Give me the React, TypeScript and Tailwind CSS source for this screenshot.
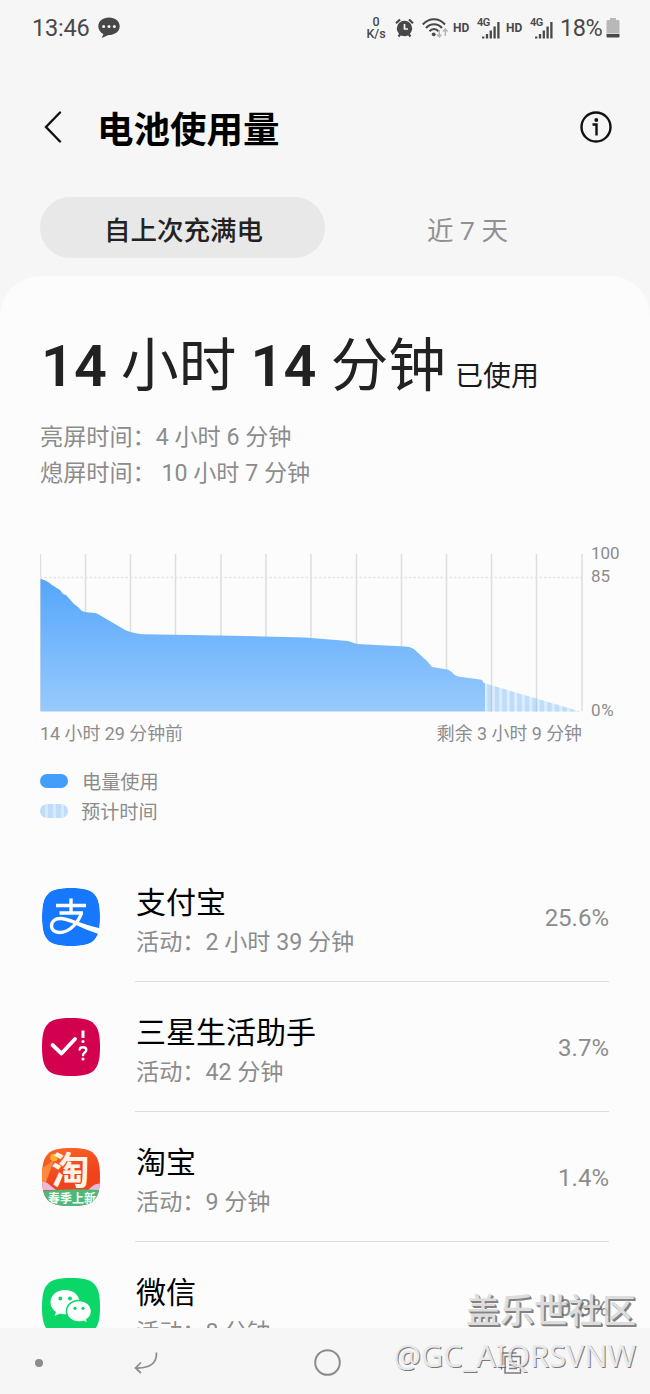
const apps = [
  { name: '支付宝', active: '活动：2 小时 39 分钟', percent: '25.6%', Icon: AlipayIcon },
  { name: '三星生活助手', active: '活动：42 分钟', percent: '3.7%', Icon: AssistantIcon },
  { name: '淘宝', active: '活动：9 分钟', percent: '1.4%', Icon: TaobaoIcon },
  { name: '微信', active: '活动：8 分钟', percent: '0.8%', Icon: WechatIcon },
];

const gridLines = [0.5, 45.5, 90.5, 135.5, 181, 226, 271, 316.5, 361.5, 406.5, 451.5, 496.5, 542];
const stripes = [445.5, 453, 460.5, 468, 475.5, 483, 490.5, 498, 505.5, 513, 520.5, 528, 535.5];

// One UI squircle shared by every app icon
const SQUIRCLE = 'M29 0C52 0 58 6 58 29C58 52 52 58 29 58C6 58 0 52 0 29C0 6 6 0 29 0Z';

function AlipayIcon() {
  return (
    <svg className="block h-[58px] w-[58px]" viewBox="0 0 58 58">
      <clipPath id="alipay-clip"><path d={SQUIRCLE} /></clipPath>
      <g clipPath="url(#alipay-clip)">
        <path d={SQUIRCLE} fill="#1677ff" />
        <g fill="none" stroke="#fff">
          <path d="M14 17.500H44M29 10.500V25M17.500 25H41" strokeWidth="3.400" />
          <path d="M39.500 25C36.500 34 28 44.500 17.500 44.500C12 44.500 9.500 41.500 9.500 38C9.500 33.500 13 30.500 18.500 30.500C27 30.500 37 37.500 58 42" strokeWidth="3.400" />
        </g>
        <path d="M32 33C40 37 50 39.500 58 40.500V46.500C50 44 40 40 31 35.500Z" fill="#fff" />
      </g>
    </svg>
  );
}

function AssistantIcon() {
  return (
    <svg className="block h-[58px] w-[58px]" viewBox="0 0 58 58">
      <path d={SQUIRCLE} fill="#d3004f" />
      <g fill="none" stroke="#fff" strokeLinecap="round" strokeLinejoin="round">
        <path d="M10.500 27L19.500 35.500L33 21" strokeWidth="3.800" />
        <path d="M41 12.500V20" strokeWidth="3" strokeLinecap="butt" />
        <path d="M37.700 31.500C38 28.500 44.300 28.300 44.300 32C44.300 34.500 41 34.500 41 37.300" strokeWidth="2.300" />
      </g>
      <circle cx="41" cy="23.500" r="1.600" fill="#fff" />
      <circle cx="41" cy="41" r="1.600" fill="#fff" />
    </svg>
  );
}

function TaobaoIcon() {
  return (
    <svg className="block h-[58px] w-[58px]" viewBox="0 0 58 58">
      <defs>
        <linearGradient id="taobao-bg" x1="0" y1="0" x2="0.3" y2="1">
          <stop offset="0" stopColor="#fa6a2a" />
          <stop offset="0.6" stopColor="#f0431c" />
        </linearGradient>
        <clipPath id="taobao-clip"><path d={SQUIRCLE} /></clipPath>
      </defs>
      <g clipPath="url(#taobao-clip)">
        <path d="M0 0H58V58H0Z" fill="url(#taobao-bg)" />
        <path d="M0 20L12 12L4 34L0 36Z" fill="#fb8a3c" />
        <path d="M0 34C5 33 8 38 14 42H0ZM58 36C53 35 50 39 46 42H58Z" fill="#e9b9dc" />
        <path d="M0 43Q29 40 58 42V58H0Z" fill="#4fb878" />
        <circle cx="12" cy="9.500" r="3.800" fill="#fdb22b" />
        <text x="28.500" y="35.500" textAnchor="middle" fontSize="38" fontWeight="600" fill="#fff3e6" fontFamily="'Noto Sans CJK SC', sans-serif">淘</text>
        <text x="30" y="54.500" textAnchor="middle" fontSize="12" fontWeight="700" fill="#f2fff4" fontFamily="'Noto Sans CJK SC', sans-serif">春季上新</text>
      </g>
    </svg>
  );
}

function WechatIcon() {
  return (
    <svg className="block h-[58px] w-[58px]" viewBox="0 0 58 58">
      <path d={SQUIRCLE} fill="#0bd768" />
      <path d="M23 12C14.500 12 8.500 17.500 8.500 24.300C8.500 28.500 10.500 31.500 14 34L12.500 38L18 35.500C31 39 37.500 31 37.500 24.300C37.500 17.500 31.500 12 23 12Z" fill="#fff" />
      <path d="M37 22.500C29.500 22.500 24.500 27.300 24.500 33.300C24.500 39.300 29.500 44 37 44C38.500 44 40 43.800 41.300 43.400L45.800 45.500L44.700 41.700C47.800 39.700 49.500 36.700 49.500 33.300C49.500 27.300 44.500 22.500 37 22.500Z" fill="#fff" stroke="#0bd768" strokeWidth="1.500" />
      <g fill="#0bd768">
        <circle cx="18.300" cy="20.500" r="1.900" />
        <circle cx="28" cy="20.500" r="1.900" />
        <circle cx="33" cy="30.300" r="1.600" />
        <circle cx="41" cy="30.300" r="1.600" />
      </g>
    </svg>
  );
}

function SignalIcon() {
  return (
    <div className="relative h-[22px] w-[23px]">
      <span className="absolute top-0 left-0 text-[11px] leading-none font-semibold tracking-[-0.5px]">4G</span>
      <svg className="absolute right-0 bottom-0" width="18" height="18" viewBox="0 0 18 18" stroke="#484848" strokeWidth="2.3">
        <path d="M1.200 15.500V17.500M5 13V17.500M8.800 9.500V17.500M12.600 5.500V17.500M16.400 1V17.500" />
      </svg>
    </div>
  );
}

function StatusBar() {
  return (
    <div className="flex h-[56px] shrink-0 items-center pl-[32px] text-[#484848]">
      <span className="w-[58px] pt-[2px] text-[23.500px] leading-none tracking-[-0.200px]">13:46</span>
      <svg className="ml-[8px]" width="22" height="22" viewBox="0 0 22 22">
        <path d="M11 0.500C4.800 0.500 0.300 4.300 0.300 9.300C0.300 12.700 2.200 15.600 5.400 17.100L3.800 21L10.500 18.100C17 18.200 21.700 14.300 21.700 9.300C21.700 4.300 17.200 0.500 11 0.500Z" fill="#484848" />
        <g fill="#f6f6f6">
          <circle cx="5.600" cy="9.500" r="1.500" />
          <circle cx="11" cy="9.500" r="1.500" />
          <circle cx="16.400" cy="9.500" r="1.500" />
        </g>
      </svg>
      <div className="ml-[246px] flex w-[20px] flex-col items-center text-[12.500px] leading-[12px] font-medium">
        <span>0</span>
        <span>K/s</span>
      </div>
      <svg className="ml-[9px]" width="19" height="20" viewBox="0 0 19 20">
        <circle cx="9.500" cy="10.500" r="7.700" fill="#484848" />
        <path d="M1 5.300L5 1.500M18 5.300L14 1.500M3.500 18.500L5.500 16M15.500 18.500L13.500 16" stroke="#484848" strokeWidth="2.200" />
        <path d="M9.500 6V11H13" fill="none" stroke="#f6f6f6" strokeWidth="1.700" />
      </svg>
      <svg className="ml-[8px]" width="27" height="22" viewBox="0 0 27 22" fill="none">
        <g stroke="#484848" strokeWidth="2.100">
          <path d="M0.800 7.500C7 0.500 17 0.500 23 7.500" />
          <path d="M4 11C8.500 6 15.500 6 20 11" />
          <path d="M7.500 14.300C10.200 11.300 13.800 11.300 16.500 14.300" />
        </g>
        <circle cx="11.700" cy="17.300" r="1.900" fill="#484848" />
        <path d="M17.300 13V19.500M15 17.500L17.300 20L19.600 17.500M23.300 19V12.500M21 14.500L23.300 12L25.600 14.500" stroke="#b5b5b5" strokeWidth="1.500" />
      </svg>
      <span className="ml-[4px] w-[17px] text-[12px] leading-none font-bold">HD</span>
      <div className="ml-[7px]"><SignalIcon /></div>
      <span className="ml-[6px] w-[17px] text-[12px] leading-none font-bold">HD</span>
      <div className="ml-[7px]"><SignalIcon /></div>
      <span className="ml-[7px] w-[43px] pt-[2px] text-[23.500px] leading-none tracking-[-0.500px]">18%</span>
      <svg className="ml-[3px]" width="14" height="20" viewBox="0 0 14 20">
        <path d="M4 0H10V2H12C13 2 13.500 2.500 13.500 3.500V15.500H0.500V3.500C0.500 2.500 1 2 2 2H4Z" fill="#b8b8b8" />
        <path d="M0.500 16H13.500V18C13.500 19 13 19.500 12 19.500H2C1 19.500 0.500 19 0.500 18Z" fill="#484848" />
      </svg>
    </div>
  );
}

function BatteryChart() {
  return (
    <div className="flex h-[166px] pl-[40px]">
      <svg className="mt-[6px] block h-[159px] w-[543px] shrink-0" viewBox="0 0 543 159">
        <defs>
          <linearGradient id="usage" x1="0" y1="0" x2="0" y2="1">
            <stop offset="0" stopColor="#55a6fa" />
            <stop offset="1" stopColor="#98cafd" />
          </linearGradient>
          <clipPath id="estimate"><path d="M445 129.500L540 157.500H445Z" /></clipPath>
        </defs>
        {gridLines.map((x) => (
          <path key={x} d={`M${x} 0V157`} stroke="#dedede" strokeWidth="1.500" />
        ))}
        <path d="M0 23.500H543" stroke="#e4e4e4" strokeWidth="1.500" strokeDasharray="2.500 2" />
        <path
          d="M0.500 25C5 25.500 8 28 12 31L20 36L23 40L26 41L34 50L38 53L42 57C46 59 50 58 57 59.500L86 76.500C92 78.500 97 80 103 80.300L179 81.500L265 83.500L308 87L317 90L365 92.500C371 93 374 94.500 377 98L387 107L392 113L407 115.500C412 116.500 413 121 418 122.500L440 125.500C444 126 442 129 445.500 129.500V157.500H0.500Z"
          fill="url(#usage)"
        />
        <path d="M445 129.500L540 157.500H445Z" fill="#dcedff" />
        <g clipPath="url(#estimate)">
          {stripes.map((x) => (
            <path key={x} d={`M${x + 4} 125V158`} stroke="#bfdcf9" strokeWidth="4.500" />
          ))}
          <path d="M451.500 125V158M496.500 125V158" stroke="#b4cde8" strokeWidth="1.500" />
        </g>
      </svg>
      <div className="ml-[8px] flex flex-col text-[17px] leading-[18px] text-[#8c8c8c]">
        <span className="mt-[-4px]">100</span>
        <span className="mt-[5px]">85</span>
        <span className="mt-[116px] tracking-[0.700px]">0%</span>
      </div>
    </div>
  );
}

export default function App() {
  return (
    <div className="relative flex h-[1394px] w-[650px] flex-col overflow-hidden bg-[#f6f6f6] font-[Roboto,'Noto_Sans_CJK_SC',sans-serif] whitespace-nowrap">
      <StatusBar />

      <header className="flex h-[141px] shrink-0 items-center pr-[38px] pl-[44px]">
        <svg width="18" height="32" viewBox="0 0 18 32" fill="none" stroke="#111" strokeWidth="2.400" strokeLinecap="round">
          <path d="M16 1.500L2 16L16 30.500" />
        </svg>
        <h1 className="ml-[35px] pt-[8px] text-[36.500px] leading-[50px] font-semibold text-black">电池使用量</h1>
        <svg className="ml-auto" width="32" height="32" viewBox="0 0 32 32" fill="none" stroke="#111">
          <circle cx="16" cy="16" r="14.500" strokeWidth="2.400" />
          <path d="M12.500 13.500H16.500V24.500" strokeWidth="2.400" />
          <circle cx="16.300" cy="9" r="1.900" fill="#111" stroke="none" />
        </svg>
      </header>

      {/* Period tabs */}
      <div className="flex h-[79px] shrink-0 pl-[40px] text-[26.500px]">
        <div className="flex h-[61px] w-[285px] items-center justify-center rounded-full bg-[#e8e8e8] pt-[7px] pl-[2px] font-medium text-[#222]">自上次充满电</div>
        <div className="flex h-[61px] w-[285px] items-center justify-center pt-[6px] text-[#919191]">近 7 天</div>
      </div>

      <main className="flex h-[1052px] shrink-0 flex-col overflow-hidden rounded-t-[40px] bg-[#fcfcfc]">
        <div className="mt-[53px] flex h-[76px] items-baseline pl-[41px] text-[57.600px] leading-[76px] text-[#222]">
          <span><b className="font-semibold">14</b> 小时 <b className="font-semibold">14</b> 分钟</span>
          <span className="ml-[9px] text-[28px] text-[#1a1a1a]">已使用</span>
        </div>
        <div className="mt-[15px] pl-[40px] text-[23.150px] leading-[36px] text-[#8c8c8c]">
          <p>亮屏时间：4 小时 6 分钟</p>
          <p>熄屏时间： 10 小时 7 分钟</p>
        </div>

        <div className="mt-[56px]"><BatteryChart /></div>
        <div className="mt-[7px] flex h-[28px] items-center justify-between pr-[68px] pl-[40px] text-[17.900px] text-[#8c8c8c]">
          <span>14 小时 29 分钟前</span>
          <span>剩余 3 小时 9 分钟</span>
        </div>

        <div className="mt-[18px] flex flex-col pl-[40px] text-[19.200px] leading-[30px] text-[#8c8c8c]">
          <div className="flex h-[30px] items-center">
            <span className="h-[14px] w-[28px] rounded-full bg-[#429efa]" />
            <span className="ml-[14px] pt-[5px]">电量使用</span>
          </div>
          <div className="flex h-[30px] items-center">
            <span className="h-[14px] w-[28px] rounded-full bg-[repeating-linear-gradient(90deg,#c0dcfa_0_5px,#d8e9fc_5px_8px)]" />
            <span className="ml-[13px] pt-[5px]">预计时间</span>
          </div>
        </div>

        <ul className="mt-[26px] flex flex-col pr-[41px] pl-[42px]">
          {apps.map(({ name, active, percent, Icon }) => (
            <li key={name} className="flex h-[130px] shrink-0 items-center">
              <Icon />
              <div className="ml-[35px] flex h-full flex-1 items-center justify-between border-b border-[#dedede]">
                <div className="flex flex-col pt-[14px] pl-px">
                  <span className="text-[30px] leading-[40px] text-black">{name}</span>
                  <span className="text-[23.150px] leading-[40px] text-[#8c8c8c]">{active}</span>
                </div>
                <span className="pt-[4px] text-[24px] text-[#8c8c8c]">{percent}</span>
              </div>
            </li>
          ))}
        </ul>
      </main>

      <nav className="flex h-[66px] shrink-0 items-center bg-[#f6f6f6] pt-[3px] pl-[35px]">
        <span className="h-[8px] w-[8px] rounded-full bg-[#8c8c8c]" />
        <svg className="ml-[91px]" width="24" height="24" viewBox="0 0 24 24" fill="none" stroke="#8c8c8c" strokeWidth="1.700">
          <path d="M22.500 1.500C23 12 16 17.500 2 17M7 11.500L1.500 17L7 22" />
        </svg>
        <svg className="ml-[156px]" width="27" height="27" viewBox="0 0 27 27" fill="none" stroke="#8c8c8c" strokeWidth="2">
          <circle cx="13.500" cy="13.500" r="12.300" />
        </svg>
        <svg className="ml-[159px]" width="22" height="24" viewBox="0 0 22 24" fill="none" stroke="#7c7c7c" strokeWidth="1.500">
          <path d="M5 5.500H20.500V22H5ZM16.500 2H1.500V18.500M9 10.500H17M9 14H17M9 17.500H17" />
        </svg>
      </nav>

      {/* Community watermark over the bottom right corner */}
      <div className="absolute right-[14px] bottom-[18px] flex flex-col items-end opacity-80">
        <span className="text-[34px] leading-[46px] font-medium text-[#d6d6d6] [text-shadow:1px_1px_0_#666,2px_2px_0_#666]">盖乐世社区</span>
        <span className="font-['Noto_Sans'] text-[30.600px] leading-[42px] text-[#e6e6e6] [text-shadow:1px_1px_0_#5c5c5c]">@GC_AIQRSVNW</span>
      </div>
    </div>
  );
}
